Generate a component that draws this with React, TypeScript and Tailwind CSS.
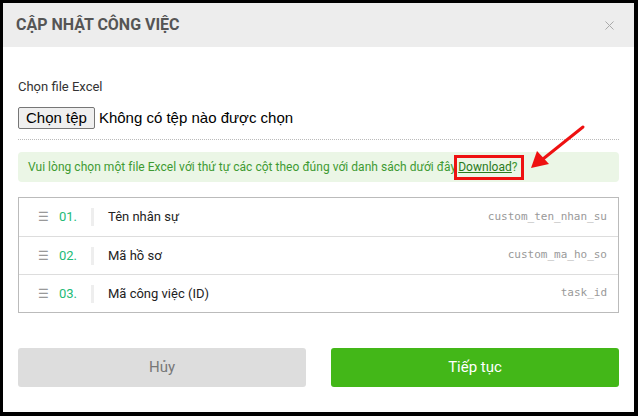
import { X } from 'lucide-react';

const fields = [
  { no: '01.', label: 'Tên nhân sự', key: 'custom_ten_nhan_su' },
  { no: '02.', label: 'Mã hồ sơ', key: 'custom_ma_ho_so' },
  { no: '03.', label: 'Mã công việc (ID)', key: 'task_id' },
];

export default function App() {
  return (
    <div className="w-[638px] h-[416px] bg-black pt-[3px] pl-[3px] pr-[4px] pb-[4px] font-['Roboto',sans-serif]">
      <div className="relative w-full h-full bg-white flex flex-col">
        {/* header */}
        <div className="h-[44px] bg-[#ededed] flex items-center justify-between pl-[13px] pr-[17px]">
          <h2 className="text-[17px] font-bold text-[#555] [transform:scaleX(0.94)] origin-left whitespace-nowrap">
            CẬP NHẬT CÔNG VIỆC
          </h2>
          <X size={15} strokeWidth={1.6} className="text-[#aaa]" />
        </div>

        <div className="px-[15px] pt-[31px] flex flex-col">
          <label className="text-[13px] leading-[18px] text-[#333]">Chọn file Excel</label>
          <div className="mt-[11px] flex items-center h-[22px] font-['Liberation_Sans',sans-serif] text-[15px] text-black">
            <span className="h-[22px] px-[7px] flex items-center border border-[#767676] rounded-[2px] bg-[#efefef]">
              Chọn tệp
            </span>
            <span className="ml-[4px]">Không có tệp nào được chọn</span>
          </div>
          <div className="mt-[10px] border-t border-dotted border-[#bbb]" />

          <div className="mt-[12px] h-[30px] rounded-[4px] bg-[#ebf6e6] flex items-center px-[10px] text-[12px] tracking-[0.03px] text-[#3e9a32]">
            <span>Vui lòng chọn một file Excel với thứ tự các cột theo đúng với danh sách dưới đây</span>
            <span className="inline-flex items-center h-[25px] border-[3px] border-[#ee1111] pl-[1px] pr-[3px] -ml-[2px]">
              <a href="#" className="underline text-[#2a7a1c]">Download</a>?
            </span>
          </div>

          <div className="mt-[15px] border border-[#bbb]">
            {fields.map((f, i) => (
              <div
                key={f.key}
                className={`h-[38px] flex items-center ${i > 0 ? 'border-t border-[#ddd]' : ''}`}
              >
                <span className="ml-[19px] w-[10px] text-[#999] text-[12px]">☰</span>
                <span className="ml-[11px] w-[24px] text-[13px] text-[#22bb77]">{f.no}</span>
                <span className="ml-[8px] w-[3px] h-[18px] bg-[#eee]" />
                <span className="ml-[14px] text-[13px] text-[#222]">{f.label}</span>
                <span className="ml-auto mr-[11px] font-['DejaVu_Sans_Mono',monospace] text-[11px] text-[#999]">
                  {f.key}
                </span>
              </div>
            ))}
          </div>

          <div className="mt-[35px] flex gap-[25px]">
            <button className="flex-1 h-[39px] rounded-[3px] bg-[#dddddd] text-[15px] text-[#777]">Hủy</button>
            <button className="flex-1 h-[39px] rounded-[3px] bg-[#43b718] text-[15px] text-white">Tiếp tục</button>
          </div>
        </div>

        {/* red annotation arrow */}
        <svg className="absolute left-[520px] top-[120px]" width="70" height="52" viewBox="0 0 70 52">
          <line x1="60" y1="4" x2="20" y2="36" stroke="#ee1111" strokeWidth="3" strokeLinecap="round" />
          <polygon points="8,45 14,28 26,41" fill="#ee1111" />
        </svg>
      </div>
    </div>
  );
}
